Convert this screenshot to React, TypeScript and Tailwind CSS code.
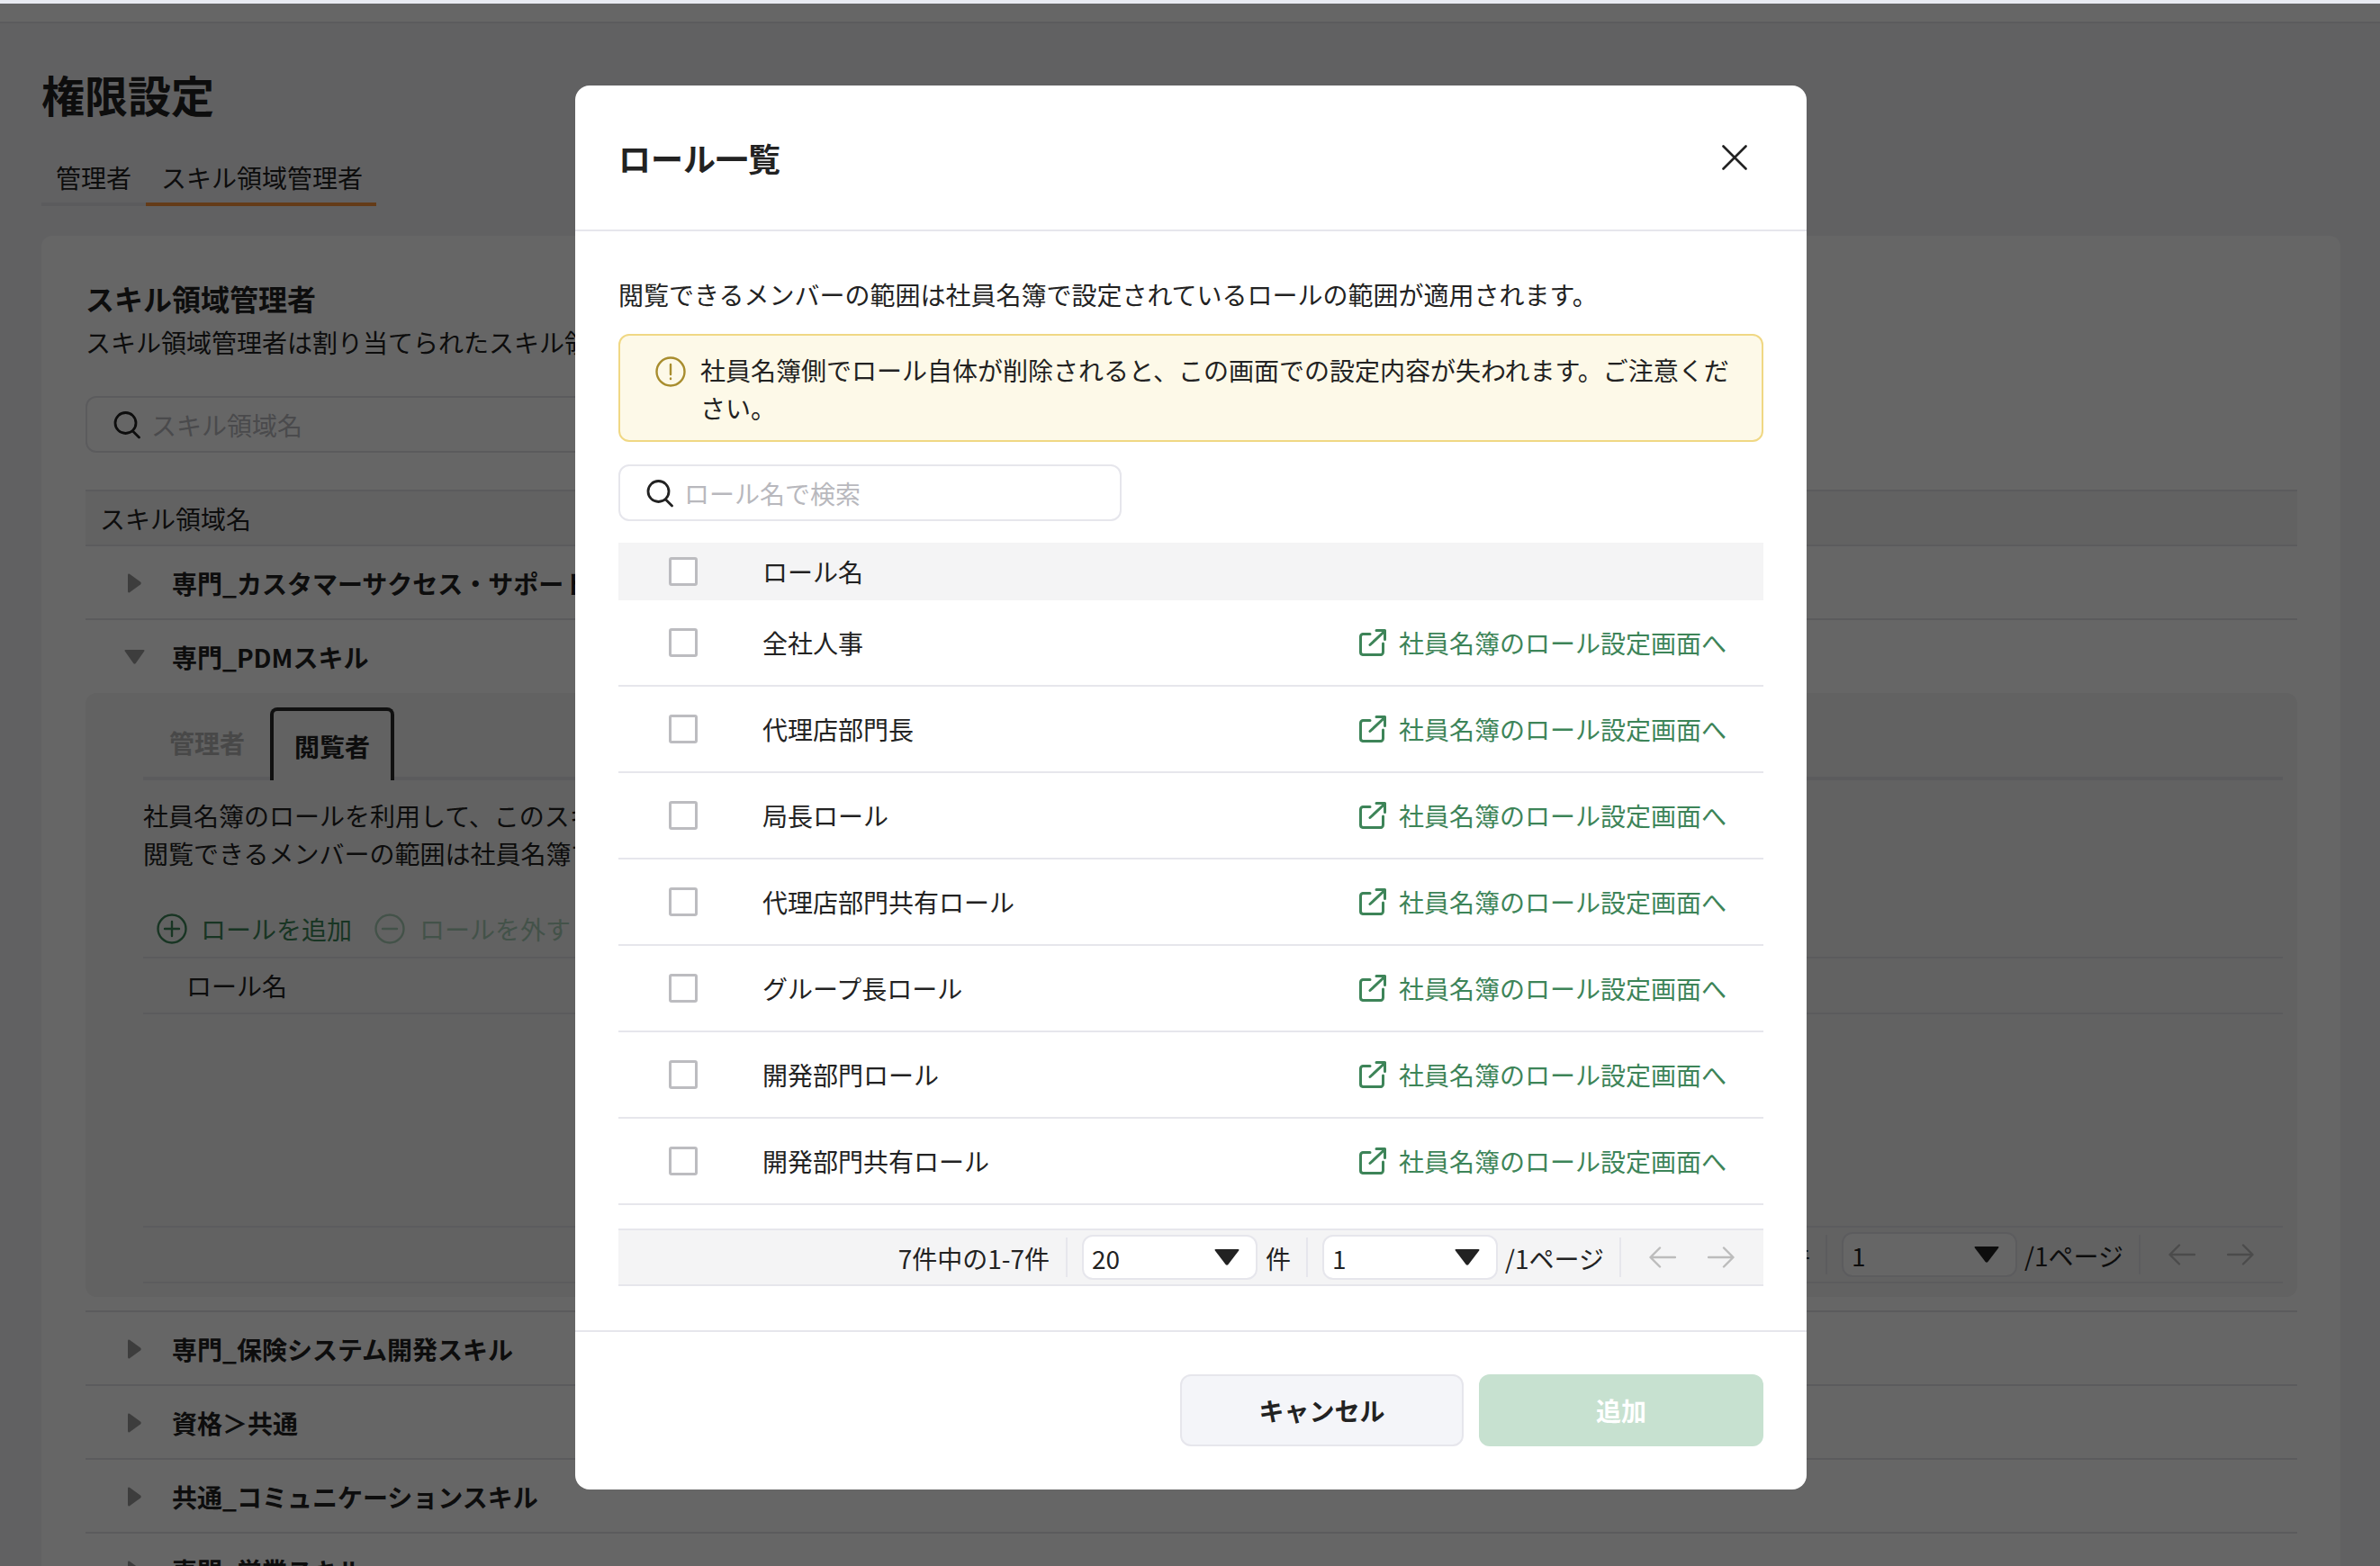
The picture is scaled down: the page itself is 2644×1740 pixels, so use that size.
import React from "react";

const roles = ["全社人事", "代理店部門長", "局長ロール", "代理店部門共有ロール", "グループ長ロール", "開発部門ロール", "開発部門共有ロール"];

function SearchIcon({ className }: { className?: string }) {
  return (
    <svg viewBox="0 0 30 32" className={className} fill="none" stroke="currentColor" strokeWidth="2.8" strokeLinecap="round">
      <circle cx="13.5" cy="14" r="11.5" />
      <path d="M21.5 23 L28.5 30" />
    </svg>
  );
}

function Triangle({ className }: { className?: string }) {
  return (
    <svg viewBox="0 0 28 18" className={className} fill="currentColor">
      <path d="M1.5 0 H26.5 Q28 0 27.2 1.4 L15.4 17 Q14 18.4 12.6 17 L0.8 1.4 Q0 0 1.5 0 Z" />
    </svg>
  );
}

function RightCaret() {
  return (
    <svg viewBox="0 0 15 22" className="w-[15px] h-[22px] text-[#9a9a9a]" fill="currentColor">
      <path d="M0 2 Q0 0 2 0.8 L14 9.5 Q15.5 11 14 12.5 L2 21.2 Q0 22 0 20 Z" />
    </svg>
  );
}

function DownCaret() {
  return (
    <svg viewBox="0 0 23 16" className="w-[23px] h-[16px] text-[#9a9a9a]" fill="currentColor">
      <path d="M1.5 0 H21.5 Q23 0 22.3 1.4 L12.8 15 Q11.5 16.4 10.2 15 L0.7 1.4 Q0 0 1.5 0 Z" />
    </svg>
  );
}

function ExternalIcon() {
  return (
    <svg viewBox="0 0 30 30" className="w-[30px] h-[30px] shrink-0" fill="none" stroke="currentColor" strokeWidth="3" strokeLinecap="round" strokeLinejoin="round">
      <path d="M12 5.5 H4 A3 3 0 0 0 1.5 8.5 V25.5 A3 3 0 0 0 4 28.5 H23 A3 3 0 0 0 26.5 25.5 V16" />
      <path d="M12 17.5 L28 2.5" />
      <path d="M19 1.6 H28.5 V11.5" />
    </svg>
  );
}

function Arrow({ dir }: { dir: "l" | "r" }) {
  return (
    <svg viewBox="0 0 30 24" className="w-[30px] h-[24px]" fill="none" stroke="currentColor" strokeWidth="2.4" strokeLinecap="round" strokeLinejoin="round">
      {dir === "l" ? <path d="M29 12 H2 M12 1.5 L1.5 12 L12 22.5" /> : <path d="M1 12 H28 M18 1.5 L28.5 12 L18 22.5" />}
    </svg>
  );
}

function Select({ value }: { value: string }) {
  return (
    <div className="w-[195px] h-[50px] rounded-xl border-2 border-[#e6e6ec] bg-white flex items-center justify-between pl-[9px] pr-[18px]">
      <span className="text-[28px] leading-none text-[#222] mt-[2px]">{value}</span>
      <Triangle className="w-[28px] h-[18px] text-[#222]" />
    </div>
  );
}

function Pagination() {
  return (
    <div className="h-[64px] border-y-2 border-[#e6e6ec] bg-[#f4f4f5] flex items-center justify-end pr-[32px] text-[28px] text-[#222] whitespace-nowrap">
      <span className="mt-[2px]">7件中の1-7件</span>
      <div className="w-[2px] h-[44px] bg-[#e6e6ec] ml-[18px] mr-[16px]" />
      <Select value="20" />
      <span className="ml-[9px] mt-[2px]">件</span>
      <div className="w-[2px] h-[44px] bg-[#e6e6ec] ml-[17px] mr-[16px]" />
      <Select value="1" />
      <span className="ml-[8px] mt-[2px]">/1ページ</span>
      <div className="w-[2px] h-[44px] bg-[#e6e6ec] ml-[17px] mr-[31px]" />
      <div className="flex items-center gap-[35px] text-[#bcbcbc]">
        <Arrow dir="l" />
        <Arrow dir="r" />
      </div>
    </div>
  );
}

function SkillRow({ name }: { name: string }) {
  return (
    <div className="h-[82px] border-b-2 border-[#e4e4e8] flex items-center pl-[47px] pt-[2px] flex-none">
      <div className="w-[49px]"><RightCaret /></div>
      <span className="text-[28px] font-bold text-[#222] whitespace-nowrap">{name}</span>
    </div>
  );
}

function Checkbox() {
  return <div className="w-[32px] h-[32px] border-[3px] border-[#bcbcc0] rounded-[3px] bg-white shrink-0" />;
}

export default function App() {
  return (
    <div className="relative h-[1740px] overflow-hidden bg-[#f2f3f6] [font-family:'Noto_Sans_CJK_JP',sans-serif]">
      <div className="h-[4px] bg-[#e9ebf2] relative z-20" />
      <div className="h-[22px] bg-white border-b-2 border-[#e4e4e8]" />

      <div className="pl-[46px] pr-[44px]">
        <h1 className="mt-[43px] text-[48px] font-bold leading-[70px] text-[#222]">権限設定</h1>
        <div className="mt-[38px] flex text-[28px] leading-[40px] text-[#222]">
          <div className="w-[116px] h-[52px] pl-[16px] border-b-4 border-[#e4e4e8] whitespace-nowrap">管理者</div>
          <div className="w-[256px] h-[52px] pl-[17px] border-b-4 border-[#f9933c] whitespace-nowrap">スキル領域管理者</div>
        </div>

        <div className="mt-[33px] h-[1600px] bg-white rounded-xl pl-[49px] pr-[48px] pt-[46px]">
          <div className="text-[32px] font-bold leading-[46px] text-[#222]">スキル領域管理者</div>
          <div className="mt-[3px] text-[28px] leading-[46px] text-[#222] whitespace-nowrap">スキル領域管理者は割り当てられたスキル領域の設定ができます。</div>

          <div className="mt-[37px] w-[1200px] h-[63px] border-2 border-[#e4e4e8] rounded-xl flex items-center pl-[29px]">
            <SearchIcon className="w-[30px] h-[32px] text-[#222]" />
            <span className="ml-[12px] text-[28px] text-[#b8b8bd]">スキル領域名</span>
          </div>

          <div className="mt-[41px] h-[63px] border-y-2 border-[#e4e4e8] bg-[#f4f4f5] flex items-center pl-[16px] text-[28px] text-[#222]">スキル領域名</div>
          <SkillRow name="専門_カスタマーサクセス・サポートスキル" />

          <div className="h-[81px] flex items-center pl-[43px]">
            <div className="w-[53px]"><DownCaret /></div>
            <span className="text-[28px] font-bold text-[#222] whitespace-nowrap">専門_PDMスキル</span>
          </div>

          <div className="h-[671px] bg-[#f5f5f5] rounded-xl pl-[64px] pr-[16px] pt-[16px]">
            <div className="h-[81px] flex items-end border-b-4 border-[#e4e4e8]">
              <div className="w-[141px] h-[77px] flex items-center pl-[29px] text-[28px] font-bold text-[#b4b4b4]">管理者</div>
              <div className="w-[138px] h-[81px] -mb-[4px] bg-[#f5f5f5] border-4 border-b-0 border-[#2a2a2a] rounded-t-lg flex items-center justify-center text-[28px] font-bold text-[#222]">閲覧者</div>
            </div>
            <div className="mt-[18px] text-[28px] leading-[42px] text-[#222] whitespace-nowrap">
              <div>社員名簿のロールを利用して、このスキル領域の閲覧者を設定します。</div>
              <div>閲覧できるメンバーの範囲は社員名簿で設定されているロールの範囲が適用されます。</div>
            </div>
            <div className="mt-[30px] h-[66px] border-b-2 border-[#e4e4e8] flex items-start pl-[15px] pt-[11px] text-[28px] whitespace-nowrap">
              <div className="flex items-center h-[44px] text-[#3d8458]">
                <svg viewBox="0 0 34 34" className="w-[34px] h-[34px]" fill="none" stroke="currentColor" strokeWidth="2.4" strokeLinecap="round">
                  <circle cx="17" cy="17" r="15.5" /><path d="M17 9 V25 M9 17 H25" />
                </svg>
                <span className="ml-[15px]">ロールを追加</span>
              </div>
              <div className="flex items-center h-[44px] ml-[25px] text-[#a9cdb6]">
                <svg viewBox="0 0 34 34" className="w-[34px] h-[34px]" fill="none" stroke="currentColor" strokeWidth="2.4" strokeLinecap="round">
                  <circle cx="17" cy="17" r="15.5" /><path d="M9 17 H25" />
                </svg>
                <span className="ml-[16px]">ロールを外す</span>
              </div>
            </div>
            <div className="h-[62px] border-b-2 border-[#e4e4e8] flex items-center pl-[48px] text-[28px] text-[#222]">ロール名</div>
            <div className="h-[235px]" />
            <Pagination />
          </div>

          <div className="h-[17px] border-b-2 border-[#e4e4e8]" />
          <SkillRow name="専門_保険システム開発スキル" />
          <SkillRow name="資格＞共通" />
          <SkillRow name="共通_コミュニケーションスキル" />
          <SkillRow name="専門_営業スキル" />
        </div>
      </div>

      <div className="absolute inset-x-0 top-[4px] bottom-0 bg-black/60 z-10 pl-[639px] pt-[91px]">
        <div className="w-[1368px] h-[1560px] bg-white rounded-2xl flex flex-col text-[#222]">
          <div className="h-[162px] flex-none border-b-2 border-[#e6e6ec] flex items-center justify-between pl-[48px] pr-[66px]">
            <h2 className="text-[36px] font-bold leading-none">ロール一覧</h2>
            <svg viewBox="0 0 28 28" className="w-[28px] h-[28px]" fill="none" stroke="#222" strokeWidth="2.6" strokeLinecap="round">
              <path d="M1.5 1.5 L26.5 26.5 M26.5 1.5 L1.5 26.5" />
            </svg>
          </div>

          <div className="px-[48px] flex-none">
            <p className="mt-[49px] text-[28px] leading-[42px] whitespace-nowrap">閲覧できるメンバーの範囲は社員名簿で設定されているロールの範囲が適用されます。</p>

            <div className="mt-[23px] h-[120px] border-2 border-[#f0d884] rounded-xl bg-[#fdf9e8] flex items-start pl-[39px] pr-[24px] pt-[17px]">
              <svg viewBox="0 0 34 34" className="w-[34px] h-[34px] mt-[6px] shrink-0 text-[#a88d2e]" fill="none" stroke="currentColor" strokeWidth="2.4" strokeLinecap="round">
                <circle cx="17" cy="17" r="15.5" /><path d="M17 9 V20" /><path d="M17 24.5 V25" />
              </svg>
              <p className="ml-[16px] text-[28px] leading-[42px]">社員名簿側でロール自体が削除されると、この画面での設定内容が失われます。ご注意ください。</p>
            </div>

            <div className="mt-[25px] w-[559px] h-[63px] border-2 border-[#e6e6ec] rounded-xl flex items-center pl-[29px]">
              <SearchIcon className="w-[30px] h-[32px] text-[#222]" />
              <span className="ml-[12px] text-[28px] text-[#b8b8bd]">ロール名で検索</span>
            </div>

            <div className="mt-[24px] h-[64px] bg-[#f4f4f5] flex items-center pl-[56px] text-[28px]">
              <Checkbox />
              <span className="ml-[72px]">ロール名</span>
            </div>

            {roles.map((r) => (
              <div key={r} className="h-[96px] border-b-2 border-[#e6e6ec] flex items-center justify-between pl-[56px] pr-[41px] text-[28px]">
                <div className="flex items-center">
                  <Checkbox />
                  <span className="ml-[72px]">{r}</span>
                </div>
                <div className="flex items-center text-[#3d8458]">
                  <ExternalIcon />
                  <span className="ml-[14px] whitespace-nowrap">社員名簿のロール設定画面へ</span>
                </div>
              </div>
            ))}

            <div className="mt-[26px]"><Pagination /></div>
          </div>

          <div className="mt-[49px] flex-none border-t-2 border-[#e6e6ec] flex justify-end gap-[17px] pr-[48px] pt-[47px]">
            <button className="w-[315px] h-[80px] rounded-xl border-2 border-[#e6e6ec] bg-[#f4f5f9] text-[28px] font-bold text-[#222]">キャンセル</button>
            <button className="w-[316px] h-[80px] rounded-xl bg-[#c7e1d0] text-[28px] font-bold text-white">追加</button>
          </div>
        </div>
      </div>
    </div>
  );
}
